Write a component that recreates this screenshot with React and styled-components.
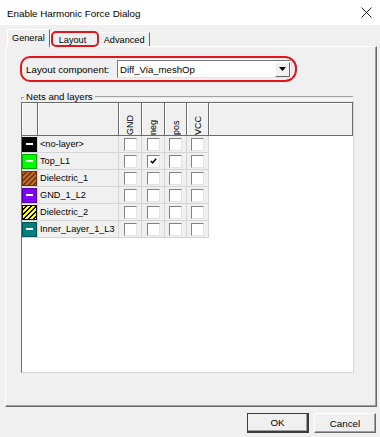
import styled, { createGlobalStyle, css } from "styled-components";

const GlobalStyle = createGlobalStyle`
  html, body {
    margin: 0;
    background: #f0f0f0;
  }
  * {
    box-sizing: border-box;
  }
`;

const LAYERS = [
  { name: "<no-layer>", color: "#000000" },
  { name: "Top_L1", color: "#00ff00", checked: 1 },
  { name: "Dielectric_1", color: "#c06a2a", hatch: "#6b3510" },
  { name: "GND_1_L2", color: "#8000ff" },
  { name: "Dielectric_2", color: "#ffff00", hatch: "#000000" },
  { name: "Inner_Layer_1_L3", color: "#008080" },
];

const NETS = ["GND", "neg", "pos", "VCC"];

const App = () => {
  return (
    <Window>
      <GlobalStyle />
      <TitleBar>
        <Title>Enable Harmonic Force Dialog</Title>
        <svg width="11" height="11" viewBox="0 0 11 11">
          <path d="M0.5 0.5 L10.5 10.5 M10.5 0.5 L0.5 10.5" stroke="#222" strokeWidth="1" />
        </svg>
      </TitleBar>
      <Body>
        <TabStrip>
          <Tab active>General</Tab>
          <Tab marked>Layout</Tab>
          <Tab last>Advanced</Tab>
        </TabStrip>
        <Panel>
          <ComponentRow>
            <Label>Layout component:</Label>
            <Combo>
              <span>Diff_Via_meshOp</span>
              <DropButton>
                <svg width="7" height="4" viewBox="0 0 7 4">
                  <path d="M0 0 H7 L3.5 4 Z" fill="#000" />
                </svg>
              </DropButton>
            </Combo>
          </ComponentRow>

          <GroupHeader>
            <span>Nets and layers</span>
          </GroupHeader>
          <Grid>
            <HeadCell />
            <HeadCell />
            {NETS.map((n) => (
              <HeadCell key={n}>
                <Vertical>{n}</Vertical>
              </HeadCell>
            ))}
            <HeadCell />
            {LAYERS.map((layer) => (
              <Row key={layer.name}>
                <SwatchCell>
                  <Swatch color={layer.color} hatch={layer.hatch} />
                </SwatchCell>
                <NameCell>{layer.name}</NameCell>
                {NETS.map((n, col) => (
                  <BoxCell key={n}>
                    <CheckBox>
                      {layer.checked === col && (
                        <svg width="7" height="6" viewBox="0 0 7 6">
                          <path d="M0.8 3 L2.6 4.8 L6.2 0.8" stroke="#000" strokeWidth="1.5" fill="none" />
                        </svg>
                      )}
                    </CheckBox>
                  </BoxCell>
                ))}
                <Spare />
              </Row>
            ))}
          </Grid>
        </Panel>
        <Footer>
          <Button primary>OK</Button>
          <Button>Cancel</Button>
        </Footer>
      </Body>
    </Window>
  );
};

export default App;

const Window = styled.div`
  width: 380px;
  height: 437px;
  display: flex;
  flex-direction: column;
  background: #f0f0f0;
  font-family: "Liberation Sans", Arial, sans-serif;
  font-size: 9.6px;
  color: #000;
`;
const TitleBar = styled.div`
  height: 25px;
  background: #fff;
  display: flex;
  align-items: center;
  justify-content: space-between;
  padding: 0 7px 0 7px;
  svg {
    margin-right: 1px;
  }
`;
const Title = styled.div`
  font-size: 9.8px;
  padding-top: 1px;
`;
const Body = styled.div`
  flex: 1;
  display: flex;
  flex-direction: column;
  padding: 4px 3px 0 5px;
`;
const TabStrip = styled.div`
  display: flex;
  align-items: flex-end;
  height: 17px;
  padding-left: 2px;
`;
const Tab = styled.div`
  position: relative;
  height: 14px;
  padding: 0 4px;
  display: flex;
  align-items: center;
  font-size: 9.2px;
  border-top: 1px solid #fff;
  border-left: 1px solid #fff;
  border-right: 1px solid ${(p) => (p.last ? "#696969" : "transparent")};
  ${(p) =>
    p.active &&
    css`
      height: 18px;
      margin-bottom: -1px;
      z-index: 1;
      background: #f0f0f0;
      padding: 0 4px 2px 4px;
      border-right: 1px solid #696969;
    `}
  ${(p) =>
    p.marked &&
    css`
      width: 49px;
      padding-left: 8px;
      &::after {
        content: "";
        position: absolute;
        left: 0px;
        right: -1px;
        top: -2px;
        bottom: -1px;
        border: 2px solid #e3141b;
        border-radius: 5px;
      }
    `}
`;
const Panel = styled.div`
  width: 372px;
  height: 361px;
  border-top: 1px solid #fff;
  border-left: 1px solid #fff;
  border-right: 1px solid #696969;
  border-bottom: 1px solid #696969;
  box-shadow: inset -1px -1px 0 #a0a0a0;
  padding: 9px 0 0 14px;
`;
const ComponentRow = styled.div`
  width: 277px;
  height: 26px;
  border: 2px solid #e3141b;
  border-radius: 10px 12px 12px 10px;
  display: flex;
  align-items: center;
  padding-left: 4px;
`;
const Label = styled.span`
  width: 91px;
  font-size: 9.8px;
`;
const Combo = styled.div`
  width: 175px;
  height: 18px;
  background: #fff;
  border-top: 1px solid #7a7a7a;
  border-left: 1px solid #7a7a7a;
  border-right: 1px solid #e3e3e3;
  border-bottom: 1px solid #e3e3e3;
  display: flex;
  align-items: center;
  justify-content: space-between;
  padding-left: 2px;
  font-size: 9.6px;
`;
const DropButton = styled.div`
  width: 15px;
  height: 15px;
  margin-right: 1px;
  background: #f0f0f0;
  border-top: 1px solid #fff;
  border-left: 1px solid #fff;
  border-right: 1px solid #696969;
  border-bottom: 1px solid #696969;
  display: flex;
  align-items: center;
  justify-content: center;
`;
const GroupHeader = styled.div`
  margin-top: 10px;
  width: 332px;
  height: 10px;
  display: flex;
  align-items: center;
  margin-left: 1px;
  span {
    padding: 0 2px 0 2px;
    line-height: 10px;
  }
  &::before {
    content: "";
    width: 2px;
    height: 2px;
    margin-top: 2px;
    border-top: 1px solid #a0a0a0;
    border-left: 1px solid #a0a0a0;
  }
  &::after {
    content: "";
    flex: 1;
    height: 2px;
    margin-top: 1px;
    border-top: 1px solid #a0a0a0;
    border-bottom: 1px solid #fff;
  }
`;
const Grid = styled.div`
  width: 333px;
  height: 271px;
  margin-left: 1px;
  background: #fff;
  border-left: 1px solid #696969;
  border-top: 1px solid #696969;
  border-right: 1px solid #d8d8d8;
  border-bottom: 1px solid #d8d8d8;
  display: grid;
  grid-template-columns: 16px 81px 23px 23px 22px 22px 1fr;
  grid-template-rows: 33px repeat(6, 17px);
  align-content: start;
`;
const HeadCell = styled.div`
  background: #f0f0f0;
  border-right: 1px solid #6d6d6d;
  border-bottom: 1px solid #6d6d6d;
  box-shadow: inset 1px 1px 0 #fff;
  display: flex;
  justify-content: center;
  padding-top: 4px;
`;
const Vertical = styled.span`
  writing-mode: vertical-rl;
  transform: rotate(180deg);
  font-size: 9px;
  line-height: 10px;
`;
const Row = styled.div`
  display: contents;
`;
const Cell = styled.div`
  background: #f0f0f0;
  border-right: 1px solid #d4d4d4;
  border-bottom: 1px solid #d4d4d4;
  display: flex;
  align-items: center;
`;
const SwatchCell = styled(Cell)`
  padding-left: 0;
`;
const Swatch = styled.span`
  position: relative;
  width: 15px;
  height: 15px;
  background: ${(p) =>
    p.hatch
      ? `repeating-linear-gradient(135deg, ${p.color} 0 2px, ${p.hatch} 2px 3.5px)`
      : p.color};
  border: 1px solid ${(p) => p.hatch || "rgba(0,0,0,0.35)"};
  ${(p) =>
    !p.hatch &&
    css`
      &::after {
        content: "";
        position: absolute;
        left: 3px;
        top: 5px;
        width: 7px;
        height: 2px;
        background: #fff;
      }
    `}
`;
const NameCell = styled(Cell)`
  padding-left: 2px;
  font-size: 9.2px;
  white-space: nowrap;
  overflow: hidden;
`;
const BoxCell = styled(Cell)`
  justify-content: center;
`;
const Spare = styled.div``;
const CheckBox = styled.span`
  width: 13px;
  height: 13px;
  background: #fff;
  border-top: 1px solid #828282;
  border-left: 1px solid #828282;
  border-right: 1px solid #e3e3e3;
  border-bottom: 1px solid #e3e3e3;
  display: flex;
  align-items: center;
  justify-content: center;
`;
const Footer = styled.div`
  display: flex;
  justify-content: flex-end;
  gap: 5px;
  padding: 6px 1px 0 0;
`;
const Button = styled.button`
  width: 62px;
  height: 20px;
  font-family: "Liberation Sans", Arial, sans-serif;
  font-size: 9.8px;
  background: #f0f0f0;
  padding: 0;
  border-top: 1px solid #fff;
  border-left: 1px solid #fff;
  border-right: 1px solid #696969;
  border-bottom: 1px solid #696969;
  box-shadow: inset -1px -1px 0 #a0a0a0;
  ${(p) =>
    p.primary &&
    css`
      outline: 1px solid #3c3c3c;
      outline-offset: -1px;
      border-right: 2px solid #3c3c3c;
      border-bottom: 2px solid #3c3c3c;
    `}
`;
